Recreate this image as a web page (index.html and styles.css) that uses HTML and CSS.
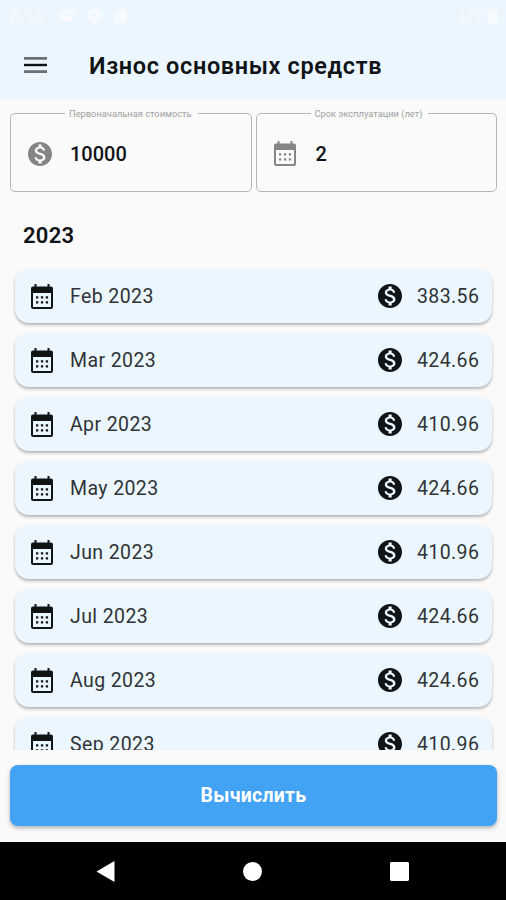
FILE: index.html
```html
<!DOCTYPE html>
<html lang="ru">
<head>
<meta charset="utf-8">
<title>Износ основных средств</title>
<link rel="stylesheet" href="styles.css">
</head>
<body>
<svg class="defs" width="0" height="0">
  <symbol id="money" viewBox="2 2 20 20"><path d="M12 2C6.48 2 2 6.48 2 12s4.48 10 10 10 10-4.48 10-10S17.52 2 12 2zm1.41 16.09V20h-2.67v-1.93c-1.71-.36-3.16-1.46-3.27-3.4h1.96c.1 1.05.82 1.87 2.65 1.87 1.96 0 2.4-.98 2.4-1.59 0-.83-.44-1.61-2.67-2.14-2.48-.6-4.18-1.62-4.18-3.67 0-1.72 1.39-2.84 3.11-3.21V4h2.67v1.95c1.86.45 2.79 1.86 2.85 3.39H14.3c-.05-1.11-.64-1.87-2.22-1.87-1.5 0-2.4.68-2.4 1.64 0 .84.65 1.39 2.67 1.91s4.18 1.39 4.18 3.91c-.01 1.83-1.38 2.83-3.12 3.16z"/></symbol>
  <symbol id="calendar" viewBox="0 0 22 25"><path fill-rule="evenodd" d="M3.5 0h2v2.500h11V0h2v2.500H20a2 2 0 0 1 2 2V23a2 2 0 0 1-2 2H2a2 2 0 0 1-2-2V4.500a2 2 0 0 1 2-2h1.500zM2 9V23h18V9zM5 12.300h2.300v2.300H5zm4.900 0h2.300v2.300H9.900zm4.900 0h2.300v2.300h-2.300zM5 17.200h2.300v2.300H5zm4.900 0h2.300v2.300H9.900zm4.900 0h2.300v2.300h-2.300z"/></symbol>
</svg>
<div class="screen">
  <header class="appbar">
    <div class="status">
      <span class="clock">8:16</span>
      <svg class="status-icons" viewBox="0 0 70 18"><path fill-rule="evenodd" d="M8 2l2 1 3-.5 1 3 2 2.500-2 3-1 3-3-.5-2 1-2-1-3 .5-1-3-2-3 2-2.500 1-3 3 .5zM8 6a2 2 0 1 0 0 4 2 2 0 0 0 0-4zM35 1l7 3v4c0 4-3 7-7 9-4-2-7-5-7-9V4zm0 5a2 2 0 1 0 0 4 2 2 0 0 0 0-4zM60 2h6q2 0 2 2v10q0 2-2 2h-9q-2 0-2-2V7z"/></svg>
      <span class="network">LTE</span>
      <svg class="battery" viewBox="0 0 10 15"><path d="M3 0h4v2h2q1 0 1 1v11q0 1-1 1H1q-1 0-1-1V3q0-1 1-1h2z"/></svg>
    </div>
    <div class="titlebar">
      <svg class="menu" viewBox="0 0 23 16"><path d="M0 0h23v2.700H0zM0 13.300h23V16H0z" fill="#6b7073"/><path d="M0 6.800h23v2.400H0z" fill="#111416"/></svg>
      <h1>Износ основных средств</h1>
    </div>
  </header>
  <section class="fields">
    <div class="field"><span class="label cost">Первоначальная стоимость</span><svg class="money"><use href="#money"/></svg><span class="value">10000</span></div>
    <div class="field"><span class="label term">Срок эксплуатации (лет)</span><svg class="calendar"><use href="#calendar"/></svg><span class="value">2</span></div>
  </section>
  <h2>2023</h2>
  <main class="list">
    <div class="row"><svg class="calendar"><use href="#calendar"/></svg><span class="month">Feb 2023</span><svg class="money"><use href="#money"/></svg><span class="sum">383.56</span></div>
    <div class="row"><svg class="calendar"><use href="#calendar"/></svg><span class="month">Mar 2023</span><svg class="money"><use href="#money"/></svg><span class="sum">424.66</span></div>
    <div class="row"><svg class="calendar"><use href="#calendar"/></svg><span class="month">Apr 2023</span><svg class="money"><use href="#money"/></svg><span class="sum">410.96</span></div>
    <div class="row"><svg class="calendar"><use href="#calendar"/></svg><span class="month">May 2023</span><svg class="money"><use href="#money"/></svg><span class="sum">424.66</span></div>
    <div class="row"><svg class="calendar"><use href="#calendar"/></svg><span class="month">Jun 2023</span><svg class="money"><use href="#money"/></svg><span class="sum">410.96</span></div>
    <div class="row"><svg class="calendar"><use href="#calendar"/></svg><span class="month">Jul 2023</span><svg class="money"><use href="#money"/></svg><span class="sum">424.66</span></div>
    <div class="row"><svg class="calendar"><use href="#calendar"/></svg><span class="month">Aug 2023</span><svg class="money"><use href="#money"/></svg><span class="sum">424.66</span></div>
    <div class="row"><svg class="calendar"><use href="#calendar"/></svg><span class="month">Sep 2023</span><svg class="money"><use href="#money"/></svg><span class="sum">410.96</span></div>
  </main>
  <button class="calculate">Вычислить</button>
  <nav class="system">
    <svg viewBox="0 0 18 21"><path d="M18 0v21L0 10.500z"/></svg>
    <svg viewBox="0 0 18 18"><circle cx="9" cy="9" r="9"/></svg>
    <svg viewBox="0 0 20 20"><rect width="20" height="20" rx="1.500"/></svg>
  </nav>
</div>
</body>
</html>
```
FILE: styles.css
```css
* { box-sizing: border-box; }
body { margin: 0; font-family: Roboto, "Noto Sans", sans-serif; color: #111416; }
.defs { display: block; }
.screen { width: 506px; height: 900px; display: flex; flex-direction: column; background: #fafafa; overflow: hidden; }
.appbar { height: 100px; flex: none; background: #ebf6ff; }
.status { height: 32px; display: flex; align-items: center; padding: 0 8px 0 10px; color: #f7fbff; fill: #f7fbff; font-size: 17px; }
.clock { width: 49px; letter-spacing: .4px; }
.status-icons { width: 70px; height: 18px; }
.network { margin-left: auto; font-size: 15px; margin-right: 4px; }
.battery { width: 10px; height: 15px; }
.titlebar { height: 66px; display: flex; align-items: center; padding-left: 24px; }
.menu { width: 23px; height: 16px; margin-right: 42px; }
h1 { margin: 2px 0 0; font-size: 23.500px; line-height: 28px; font-weight: 600; letter-spacing: .63px; white-space: nowrap; }
.fields { display: flex; gap: 4px; padding: 13px 9px 0 10px; height: 93px; flex: none; }
.field { position: relative; flex: 1; height: 79px; border: 1.500px solid #b5b5b5; border-radius: 5px; display: flex; align-items: center; padding: 2px 0 0 17px; }
.label { position: absolute; top: -6px; left: 54px; height: 12px; padding: 0 4px; background: #fafafa; color: #a0a0a0; font-size: 9.300px; line-height: 12px; white-space: nowrap; }
.label.cost { padding-right: 6px; }
.label.term { padding-right: 6px; }
.money { width: 24px; height: 24px; flex: none; }
.calendar { width: 22px; height: 25px; flex: none; }
.field svg { fill: #858585; }
.field .calendar { margin: 0 2px 0 0; }
.value { margin-left: 18px; font-size: 20px; line-height: 24px; font-weight: 500; }
h2 { margin: 29px 0 0 23px; font-size: 22px; line-height: 28px; font-weight: 600; letter-spacing: .3px; }
.list { margin-top: 14px; height: 486px; padding: 5px 14px 0 15px; overflow: hidden; display: flex; flex-direction: column; gap: 10px; }
.row { height: 54px; flex: none; border-radius: 14px; background: #ebf6ff; box-shadow: 0 2px 3px rgba(0,0,0,.28); display: flex; align-items: center; padding: 0 12px 0 16px; fill: #111416; }
.month, .sum { margin-top: 2px; font-size: 19.500px; line-height: 24px; letter-spacing: .4px; color: #303437; }
.month { margin-left: 17px; }
.row .money { margin-left: auto; }
.sum { width: 63px; margin-left: 15px; white-space: nowrap; }
.calculate { flex: none; margin: 15px 9px 0 10px; height: 61px; padding: 0; border: 0; border-radius: 8px; background: #42a3f5; box-shadow: 0 2px 4px rgba(0,0,0,.3); color: #fff; font: 700 19.500px/24px Roboto, sans-serif; letter-spacing: .25px; }
.system { margin-top: auto; height: 58px; flex: none; background: #000; fill: #fff; display: flex; align-items: center; padding: 0 97px 0 96px; justify-content: space-between; }
.system svg { width: 19px; height: 21px; }
```
